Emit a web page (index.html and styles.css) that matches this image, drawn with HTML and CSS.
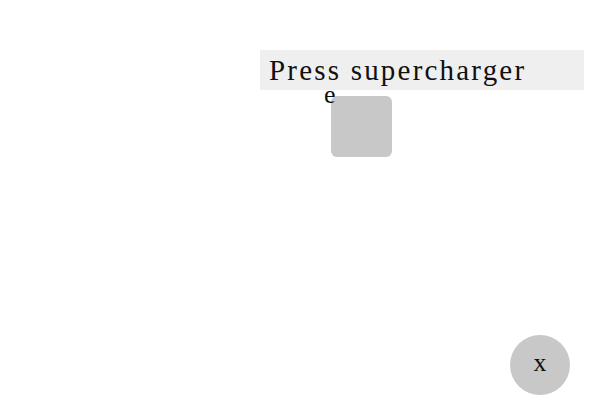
FILE: index.html
```html
<!DOCTYPE html>
<html>
<head>
<meta charset="utf-8">
<link rel="stylesheet" href="styles.css">
</head>
<body>
<div class="page">
  <div class="bar">Press supercharger</div>
  <div class="row">
    <div class="tile"><span class="tag">e</span></div>
  </div>
  <div class="fab-row">
    <div class="fab">x</div>
  </div>
</div>
</body>
</html>
```
FILE: styles.css
```css
html, body {
  margin: 0;
  padding: 0;
  background: #ffffff;
}
.page {
  width: 600px;
  height: 400px;
  display: flex;
  flex-direction: column;
  font-family: "Liberation Serif", "DejaVu Serif", serif;
  color: #111;
}
.bar {
  margin: 50px 0 0 260px;
  width: 324px;
  height: 40px;
  box-sizing: border-box;
  padding-left: 9px;
  background: #efefef;
  font-size: 29px;
  line-height: 40px;
  letter-spacing: 2.2px;
  white-space: nowrap;
}
.row {
  display: flex;
  padding-left: 331px;
  margin-top: 6px;
}
.tile {
  position: relative;
  width: 61px;
  height: 61px;
  border-radius: 6px;
  background: #c8c8c8;
}
.tag {
  position: absolute;
  left: -7px;
  top: -6px;
  font-size: 26px;
  line-height: 10px;
}
.fab-row {
  display: flex;
  justify-content: flex-end;
  padding-right: 30px;
  margin-top: auto;
  margin-bottom: 5px;
}
.fab {
  width: 60px;
  height: 60px;
  border-radius: 50%;
  background: #c8c8c8;
  display: flex;
  align-items: center;
  justify-content: center;
  font-size: 26px;
  padding-bottom: 4px;
  box-sizing: border-box;
}
```
